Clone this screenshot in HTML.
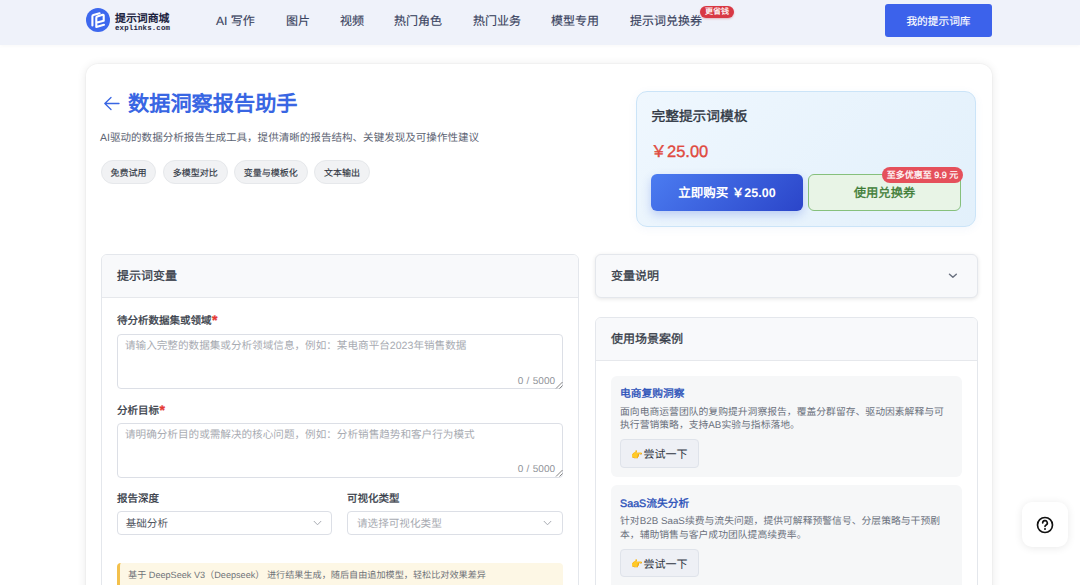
<!DOCTYPE html>
<html lang="zh-CN">
<head>
<meta charset="utf-8">
<style>
*{box-sizing:border-box;margin:0;padding:0}
html,body{width:1080px;height:585px;overflow:hidden;background:#fff;font-family:"Liberation Sans",sans-serif;color:#303133;text-rendering:geometricPrecision}
.a{position:absolute;white-space:nowrap}
#hdr{position:absolute;left:0;top:0;width:1080px;height:45px;background:#eff2fa;box-shadow:0 1px 4px rgba(0,0,0,0.03)}
.nav{position:absolute;top:12.6px;font-size:12px;line-height:16px;color:#3a4360;-webkit-text-stroke:0.15px #3a4360;white-space:nowrap}
.logo-c{position:absolute;left:86px;top:8px;width:24px;height:24px;border-radius:50%;background:#3d68ee}
.logo-t{position:absolute;left:115px;top:11.5px;font-size:10.9px;line-height:14px;font-weight:700;color:#1c2340;white-space:nowrap}
.logo-s{position:absolute;left:115px;top:25px;font-family:"Liberation Mono",monospace;font-size:7.4px;line-height:9px;font-weight:700;color:#1c2340;letter-spacing:0.16px}
.badge{position:absolute;left:700px;top:6px;width:34px;height:12px;border-radius:6px;background:#d83844;color:#fff;font-size:8px;line-height:12px;font-weight:500;-webkit-text-stroke:0.2px #fff;text-align:center;box-shadow:0 1px 2px rgba(200,40,50,.3)}
.mybtn{position:absolute;left:885px;top:4px;width:107px;height:33px;border-radius:3px;background:#3c62eb;color:#fff;font-size:10.7px;line-height:37px;text-align:center;-webkit-text-stroke:0.15px #fff}
#card{position:absolute;left:85.5px;top:63.5px;width:906px;height:600px;border-radius:12px;background:#fff;box-shadow:0 0 0 1px rgba(0,0,0,0.02),0 1px 10px rgba(0,0,0,0.1)}
.title{position:absolute;left:128px;top:91px;font-size:21.2px;line-height:28px;font-weight:700;color:#3966e3;white-space:nowrap}
.sub{position:absolute;left:100px;top:129.5px;font-size:10.55px;line-height:16px;color:#5d6473;white-space:nowrap}
.tag{position:absolute;top:160px;height:23.5px;border-radius:12px;background:#f1f2f4;border:1px solid #e6e8eb;font-size:9px;line-height:24.5px;font-weight:500;color:#2f3542;-webkit-text-stroke:0.15px #2f3542;text-align:center;white-space:nowrap}
.price{position:absolute;left:635.8px;top:91px;width:340.5px;height:136px;border-radius:11px;border:1px solid #cbe4f8;background:linear-gradient(135deg,#eff7fe 0%,#e2f0fb 100%);box-shadow:0 2px 10px rgba(60,120,200,0.06)}
.pt{position:absolute;left:651.5px;top:107.3px;font-size:13.7px;line-height:20px;font-weight:500;color:#2d3440;-webkit-text-stroke:0.35px #2d3440;white-space:nowrap}
.pp{position:absolute;left:650.5px;top:141px;font-size:16.5px;line-height:22px;font-weight:500;color:#e04a40;-webkit-text-stroke:0.35px #e04a40;white-space:nowrap}
.buy{position:absolute;left:651px;top:174px;width:152px;height:37px;border-radius:6px;background:linear-gradient(135deg,#4b7cf1 0%,#2b45c9 100%);color:#fff;font-size:12.5px;line-height:39px;font-weight:700;text-align:center;box-shadow:0 4px 10px rgba(50,90,220,0.25)}
.cpn{position:absolute;left:808px;top:174px;width:153px;height:37px;border-radius:6px;background:#e8f4e6;border:1px solid #86c07c;color:#3b7a33;font-size:12.3px;line-height:37px;font-weight:500;-webkit-text-stroke:0.35px #3b7a33;text-align:center}
.rbadge{position:absolute;left:882px;top:167px;width:81px;height:16px;border-radius:8px;background:#e5505b;color:#fff;font-size:9px;line-height:16px;font-weight:500;-webkit-text-stroke:0.25px #fff;text-align:center}
.panel{position:absolute;border:1px solid #e4e7ec;border-radius:6px;background:#fff;overflow:hidden}
.ph{position:absolute;left:0;top:0;right:0;height:43px;background:#f8f9fb;border-bottom:1px solid #e6e8ec}
.pht{position:absolute;left:16px;top:14px;font-size:12px;line-height:20px;font-weight:500;color:#343a46;-webkit-text-stroke:0.3px #343a46;white-space:nowrap}
.lbl{position:absolute;font-size:10.5px;line-height:16px;font-weight:500;color:#343a46;-webkit-text-stroke:0.3px #343a46;white-space:nowrap}
.lbl i{font-style:normal;color:#e53935;-webkit-text-stroke:0.3px #e53935;font-size:14px;font-weight:700;margin-left:0.5px;vertical-align:-1px;line-height:10px}
.ta{position:absolute;left:116.5px;width:446.5px;height:55px;border:1px solid #dcdfe6;border-radius:4px;background:#fff}
.ph2{position:absolute;font-size:10.6px;line-height:16px;color:#a8abb2;white-space:nowrap}
.cnt{position:absolute;width:60px;text-align:right;font-size:10px;line-height:12px;color:#909399;white-space:nowrap;word-spacing:0.6px}
.sel{position:absolute;top:511px;height:24px;border:1px solid #dcdfe6;border-radius:4px;background:#fff}
.warn{position:absolute;left:117px;top:563px;width:446px;height:30px;background:#fdf7e5;border-left:3px solid #f3c04c;border-radius:4px}
.case{position:absolute;left:611px;width:351px;background:#f6f7f8;border-radius:6px}
.ct{position:absolute;font-size:10.74px;line-height:16px;font-weight:500;color:#2a50b8;-webkit-text-stroke:0.35px #2a50b8;white-space:nowrap}
.cd{position:absolute;font-size:9.82px;line-height:15px;color:#6b717d;white-space:nowrap}
.try{position:absolute;width:78.5px;height:28.7px;border:1px solid #dfe3ea;border-radius:4px;background:#eef0f5;font-size:11px;line-height:26px;padding-top:2px;color:#2f3542;text-align:center;white-space:nowrap}
.emo{font-size:9.5px;vertical-align:0.5px;margin-right:0.5px}
.help{position:absolute;left:1022px;top:501.5px;width:45.5px;height:45.5px;border-radius:10px;background:#fff;box-shadow:0 1px 8px rgba(0,0,0,0.09)}
</style>
</head>
<body>
<div id="hdr">
  <svg class="a" style="left:86px;top:8px" width="24" height="24" viewBox="0 0 24 24"><circle cx="12" cy="12" r="12" fill="#3d68ee"/><path d="M6.4 17.4V8.3Q6.4 7.3 7.4 7L13.6 5.2" fill="none" stroke="#fff" stroke-width="2.1" stroke-linecap="round" stroke-linejoin="round"/><path d="M10.3 19V9.7Q10.3 8.7 11.3 8.4L16.6 6.8Q17.7 6.5 17.7 7.6V12.7L10.3 14.7M10.3 19L18 16.8" fill="none" stroke="#fff" stroke-width="2.1" stroke-linecap="round" stroke-linejoin="round"/></svg>
  <div class="logo-t">提示词商城</div>
  <div class="logo-s">explinks.com</div>
  <div class="nav" style="left:216px">AI 写作</div>
  <div class="nav" style="left:286px">图片</div>
  <div class="nav" style="left:340px">视频</div>
  <div class="nav" style="left:394px">热门角色</div>
  <div class="nav" style="left:473px">热门业务</div>
  <div class="nav" style="left:551px">模型专用</div>
  <div class="nav" style="left:630px">提示词兑换券</div>
  <div class="badge">更省钱</div>
  <div class="mybtn">我的提示词库</div>
</div>
<div id="card"></div>

<!-- back arrow -->
<svg class="a" style="left:103px;top:96px" width="17" height="15" viewBox="0 0 17 15"><path d="M8 1.5L1.8 7.5L8 13.5M1.8 7.5H16" fill="none" stroke="#3966e3" stroke-width="1.3" stroke-linecap="round" stroke-linejoin="round"/></svg>
<div class="title">数据洞察报告助手</div>
<div class="sub">AI驱动的数据分析报告生成工具，提供清晰的报告结构、关键发现及可操作性建议</div>
<div class="tag" style="left:101px;width:55px">免费试用</div>
<div class="tag" style="left:163px;width:64.5px">多模型对比</div>
<div class="tag" style="left:234px;width:73.5px">变量与模板化</div>
<div class="tag" style="left:314px;width:56px">文本输出</div>

<div class="price"></div>
<div class="pt">完整提示词模板</div>
<div class="pp">￥25.00</div>
<div class="buy">立即购买 ￥25.00</div>
<div class="cpn">使用兑换券</div>
<div class="rbadge">至多优惠至 9.9 元</div>

<!-- left panel -->
<div class="panel" style="left:100.5px;top:254px;width:478px;height:400px"><div class="ph"></div></div>
<div class="pht" style="left:117px;top:266px">提示词变量</div>
<div class="lbl" style="left:117px;top:313px">待分析数据集或领域<i>*</i></div>
<div class="ta" style="top:334px"></div>
<div class="ph2" style="left:125px;top:338px">请输入完整的数据集或分析领域信息，例如：某电商平台2023年销售数据</div>
<div class="cnt" style="left:495px;top:375.5px">0 / 5000</div>
<svg class="a" style="left:555px;top:381px" width="8" height="8" viewBox="0 0 8 8"><path d="M1 7.5L7.5 1M4.5 7.5L7.5 4.5" stroke="#777" stroke-width="0.9"/></svg>
<div class="lbl" style="left:117px;top:402.5px">分析目标<i>*</i></div>
<div class="ta" style="top:423px"></div>
<div class="ph2" style="left:125px;top:427px">请明确分析目的或需解决的核心问题，例如：分析销售趋势和客户行为模式</div>
<div class="cnt" style="left:495px;top:463.5px">0 / 5000</div>
<svg class="a" style="left:555px;top:469px" width="8" height="8" viewBox="0 0 8 8"><path d="M1 7.5L7.5 1M4.5 7.5L7.5 4.5" stroke="#777" stroke-width="0.9"/></svg>
<div class="lbl" style="left:117px;top:491px">报告深度</div>
<div class="lbl" style="left:347px;top:491px">可视化类型</div>
<div class="sel" style="left:116.5px;width:215.5px"></div>
<div class="ph2" style="left:125.7px;top:516.3px;color:#50555f">基础分析</div>
<div class="sel" style="left:347px;width:216px"></div>
<div class="ph2" style="left:357px;top:516.3px">请选择可视化类型</div>
<svg class="a" style="left:313px;top:520px" width="9" height="6" viewBox="0 0 9 6"><path d="M0.8 1L4.5 4.8L8.2 1" fill="none" stroke="#a8abb2" stroke-width="1"/></svg>
<svg class="a" style="left:543px;top:520px" width="9" height="6" viewBox="0 0 9 6"><path d="M0.8 1L4.5 4.8L8.2 1" fill="none" stroke="#a8abb2" stroke-width="1"/></svg>
<div class="warn"></div>
<div class="cd" style="left:128px;top:568px;font-size:9.15px;color:#6f7379">基于 DeepSeek V3（Deepseek） 进行结果生成，随后自由追加模型，轻松比对效果差异</div>

<!-- right panels -->
<div class="panel" style="left:595px;top:254px;width:383px;height:44px;background:#f8f9fb;box-shadow:0 1px 4px rgba(0,0,0,0.1)"></div>
<div class="pht" style="left:611px;top:266px">变量说明</div>
<svg class="a" style="left:948px;top:272px" width="10" height="7" viewBox="0 0 10 7"><path d="M1.5 2.3L4.9 5.3L8.3 2.3" fill="none" stroke="#6b7280" stroke-width="1.5" stroke-linecap="round" stroke-linejoin="round"/></svg>
<div class="panel" style="left:595px;top:317px;width:383px;height:400px"><div class="ph"></div></div>
<div class="pht" style="left:611px;top:329px">使用场景案例</div>
<div class="case" style="top:375.5px;height:101px"></div>
<div class="ct" style="left:620px;top:385.8px">电商复购洞察</div>
<div class="cd" style="left:620px;top:404.5px">面向电商运营团队的复购提升洞察报告，覆盖分群留存、驱动因素解释与可</div>
<div class="cd" style="left:620px;top:418px">执行营销策略，支持AB实验与指标落地。</div>
<div class="try" style="left:620px;top:439px"><span class="emo">👉</span>尝试一下</div>
<div class="case" style="top:485px;height:120px"></div>
<div class="ct" style="left:620px;top:496px">SaaS流失分析</div>
<div class="cd" style="left:620px;top:513.5px">针对B2B SaaS续费与流失问题，提供可解释预警信号、分层策略与干预剧</div>
<div class="cd" style="left:620px;top:527.5px">本，辅助销售与客户成功团队提高续费率。</div>
<div class="try" style="left:620px;top:548.5px"><span class="emo">👉</span>尝试一下</div>

<div class="help"></div>
<svg class="a" style="left:1036.25px;top:515.5px" width="18" height="18" viewBox="0 0 24 24" fill="none" stroke="#111" stroke-width="2.2" stroke-linecap="round" stroke-linejoin="round"><circle cx="12" cy="12" r="10"/><path d="M8.9 9.3a3.1 3.1 0 1 1 4.6 2.7c-.9.5-1.5 1.1-1.5 2"/><path d="M12 17.3h.01" stroke-width="2.6"/></svg>
</body>
</html>
